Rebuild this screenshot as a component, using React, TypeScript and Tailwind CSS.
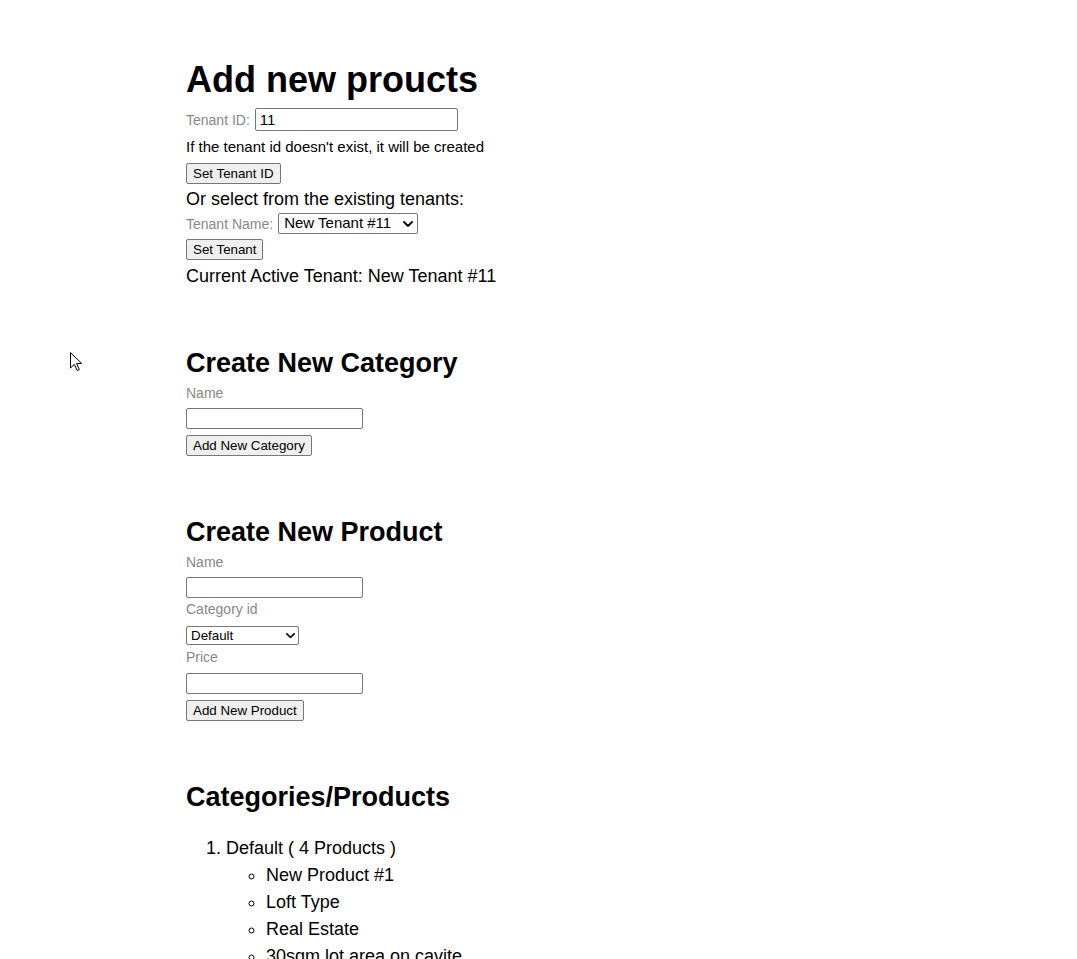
import React from 'react';

const Chevron: React.FC<{ size?: number }> = ({ size = 10 }) => (
  <svg width={size} height={size * 0.6} viewBox="0 0 10 6" fill="none" className="shrink-0">
    <path d="M1 1l4 4 4-4" stroke="#000" strokeWidth="1.8" strokeLinecap="round" strokeLinejoin="round" />
  </svg>
);

const Btn: React.FC<{ label: string; className?: string }> = ({ label, className = '' }) => (
  <button
    type="button"
    className={`block h-[21px] px-[6px] text-[13.333px] leading-[15px] text-black bg-[#efefef] border border-[#767676] rounded-[2px] ${className}`}
  >
    {label}
  </button>
);

const TextInput: React.FC<{ className?: string }> = ({ className = '' }) => (
  <input
    type="text"
    className={`block h-[21px] w-[177px] px-[3px] text-[13.333px] bg-white border border-[#767676] rounded-[2px] outline-none ${className}`}
  />
);

const Label: React.FC<{ text: string; className?: string }> = ({ text, className = '' }) => (
  <label className={`block text-[14px] leading-[16px] text-[#888] ${className}`}>{text}</label>
);

const products = ['New Product #1', 'Loft Type', 'Real Estate', '30sqm lot area on cavite'];

export default function App() {
  return (
    <div className="relative min-h-screen bg-white text-black font-['Liberation_Sans',Arial,sans-serif] pl-[186px] pt-[60px] pb-[40px]">
      {/* mouse pointer */}
      <svg className="absolute left-[70px] top-[352px]" width="12" height="19" viewBox="0 0 12 19">
        <path d="M0.5 0.5v15.5l3.8-3.6 2.8 6.1 2.2-1-2.7-6h5.1z" fill="#fff" stroke="#000" strokeWidth="1" strokeLinejoin="round" />
      </svg>

      <h1 className="text-[36px] font-bold leading-[40px]">Add new proucts</h1>

      <div className="mt-[8px] flex items-center gap-[5px] h-[23px]">
        <span className="text-[14px] leading-[16px] text-[#888]">Tenant ID:</span>
        <input
          type="text"
          defaultValue="11"
          className="h-[23px] w-[203px] px-[4px] text-[15px] bg-white border border-[#767676] rounded-[2px] outline-none"
        />
      </div>
      <p className="mt-[7px] text-[15px] leading-[17px]">If the tenant id doesn't exist, it will be created</p>
      <Btn label="Set Tenant ID" className="mt-[8px]" />
      <p className="mt-[5px] text-[18px] leading-[21px]">Or select from the existing tenants:</p>
      <div className="mt-[3px] flex items-center gap-[5px] h-[21px]">
        <span className="text-[14px] leading-[16px] text-[#888]">Tenant Name:</span>
        <div className="flex items-center justify-between gap-[6px] h-[21px] w-[140px] pl-[5px] pr-[4px] text-[15px] border border-[#767676] rounded-[2px]">
          <span>New Tenant #11</span>
          <Chevron />
        </div>
      </div>
      <Btn label="Set Tenant" className="mt-[5px]" />
      <p className="mt-[6px] text-[18px] leading-[21px]">Current Active Tenant: New Tenant #11</p>

      <h2 className="mt-[61px] text-[27px] font-bold leading-[30px]">Create New Category</h2>
      <Label text="Name" className="mt-[7px]" />
      <TextInput className="mt-[7px]" />
      <Btn label="Add New Category" className="mt-[6px]" />

      <h2 className="mt-[61px] text-[27px] font-bold leading-[30px]">Create New Product</h2>
      <Label text="Name" className="mt-[7px]" />
      <TextInput className="mt-[7px]" />
      <Label text="Category id" className="mt-[3px]" />
      <div className="mt-[9px] flex items-center justify-between h-[19px] w-[113px] pl-[4px] pr-[3px] text-[13.333px] border border-[#767676] rounded-[2px]">
        <span>Default</span>
        <Chevron size={9} />
      </div>
      <Label text="Price" className="mt-[4px]" />
      <TextInput className="mt-[8px]" />
      <Btn label="Add New Product" className="mt-[6px]" />

      <h2 className="mt-[61px] text-[27px] font-bold leading-[30px]">Categories/Products</h2>
      <ol className="mt-[23px] list-decimal pl-[40px] text-[18px] leading-[27px]">
        <li>
          Default ( 4 Products )
          <ul className="list-[circle] pl-[40px]">
            {products.map(p => (
              <li key={p}>{p}</li>
            ))}
          </ul>
        </li>
      </ol>
    </div>
  );
}
